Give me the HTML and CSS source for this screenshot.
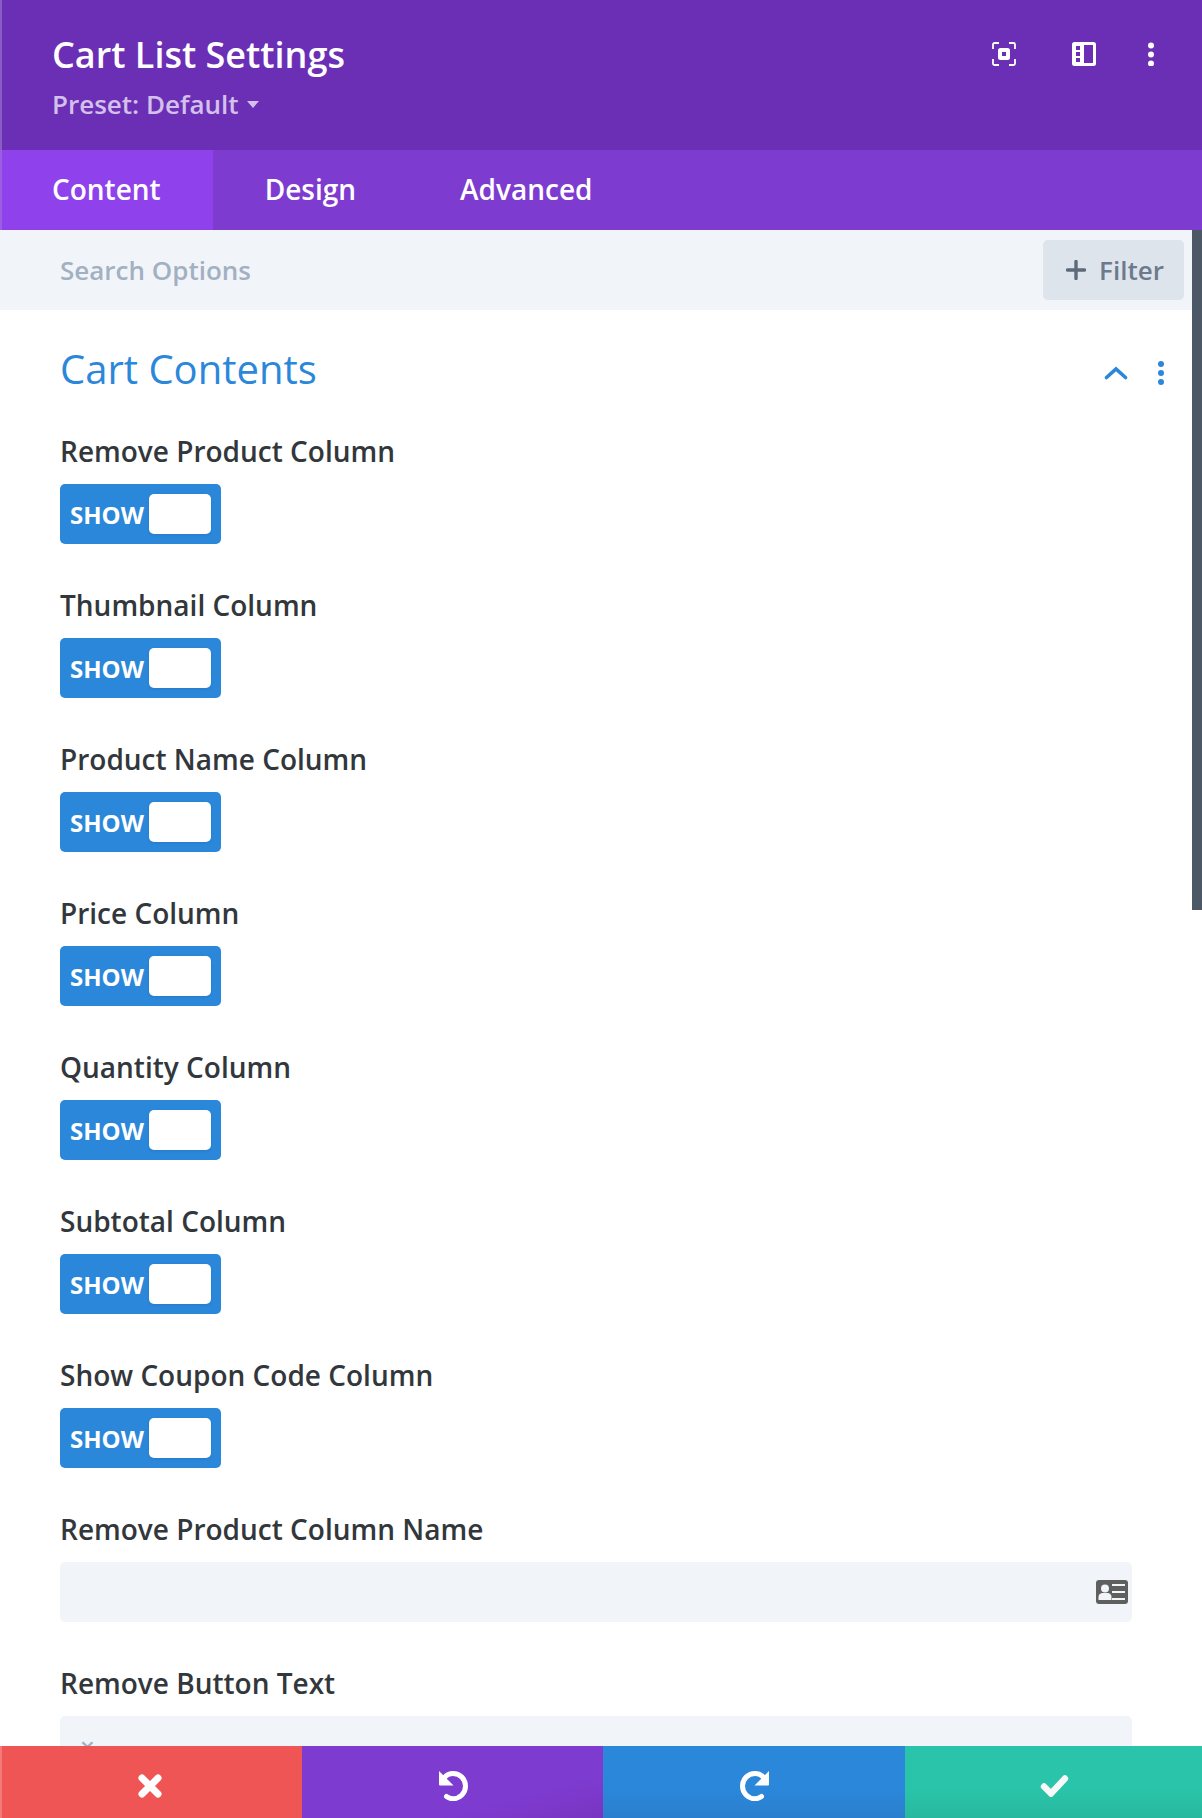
FILE: index.html
```html
<!DOCTYPE html>
<html lang="en">
<head>
<meta charset="utf-8">
<title>Cart List Settings</title>
<link rel="stylesheet" href="styles.css">
</head>
<body>
<div class="modal">
  <header class="head">
    <div class="head-text">
      <h1 class="title">Cart List Settings</h1>
      <div class="preset">Preset: Default <span class="caret"></span></div>
    </div>
    <div class="head-icons">
      <svg class="hi" viewBox="0 0 24 24"><path d="M1 7V2.500A1.500 1.500 0 0 1 2.500 1H7M17 1h4.500A1.500 1.500 0 0 1 23 2.500V7M23 17v4.500a1.500 1.500 0 0 1-1.500 1.500H17M7 23H2.500A1.500 1.500 0 0 1 1 21.500V17" fill="none" stroke="#fff" stroke-width="1.800"/><path fill-rule="evenodd" d="M8.500 6h7A2.500 2.500 0 0 1 18 8.500v7a2.500 2.500 0 0 1-2.500 2.500h-7A2.500 2.500 0 0 1 6 15.500v-7A2.500 2.500 0 0 1 8.500 6zM10 10v4h4v-4z" fill="#fff"/></svg>
      <svg class="hi" viewBox="0 0 24 24"><path fill-rule="evenodd" d="M2.500 0h19A2.500 2.500 0 0 1 24 2.500v19a2.500 2.500 0 0 1-2.500 2.500h-19A2.500 2.500 0 0 1 0 21.500v-19A2.500 2.500 0 0 1 2.500 0zM4 4v4h4V4zm0 6v4h4v-4zm0 6v4h4v-4zM12 3v18h9V3z" fill="#fff"/></svg>
      <svg class="hi dots" viewBox="0 0 6 24"><circle cx="3" cy="3.500" r="3" fill="#fff"/><circle cx="3" cy="12.500" r="3" fill="#fff"/><circle cx="3" cy="21.500" r="3" fill="#fff"/></svg>
    </div>
  </header>
  <nav class="tabs">
    <a class="tab active">Content</a>
    <a class="tab design">Design</a>
    <a class="tab">Advanced</a>
  </nav>
  <div class="search">
    <span class="search-ph">Search Options</span>
    <button class="filter"><svg class="plus" viewBox="0 0 20 20"><path d="M10 1.500v17M1.500 10h17" stroke="#5c6a7a" stroke-width="3.400" stroke-linecap="round"/></svg>Filter</button>
  </div>
  <div class="scrollbar"></div>
  <main class="body">
    <div class="section-head">
      <h2 class="section-title">Cart Contents</h2>
      <div class="section-icons">
        <svg class="chev" viewBox="0 0 24 14"><path d="M2.500 11.500 12 3l9.500 8.500" fill="none" stroke="#2b87da" stroke-width="3.600" stroke-linecap="round"/></svg>
        <svg class="sdots" viewBox="0 0 6 24"><circle cx="3" cy="3" r="3" fill="#2b87da"/><circle cx="3" cy="12" r="3" fill="#2b87da"/><circle cx="3" cy="21" r="3" fill="#2b87da"/></svg>
      </div>
    </div>
    <div class="field"><label class="label">Remove Product Column</label><div class="toggle"><span>SHOW</span><i class="knob"></i></div></div>
    <div class="field"><label class="label">Thumbnail Column</label><div class="toggle"><span>SHOW</span><i class="knob"></i></div></div>
    <div class="field"><label class="label">Product Name Column</label><div class="toggle"><span>SHOW</span><i class="knob"></i></div></div>
    <div class="field"><label class="label">Price Column</label><div class="toggle"><span>SHOW</span><i class="knob"></i></div></div>
    <div class="field"><label class="label">Quantity Column</label><div class="toggle"><span>SHOW</span><i class="knob"></i></div></div>
    <div class="field"><label class="label">Subtotal Column</label><div class="toggle"><span>SHOW</span><i class="knob"></i></div></div>
    <div class="field"><label class="label">Show Coupon Code Column</label><div class="toggle"><span>SHOW</span><i class="knob"></i></div></div>
    <div class="field"><label class="label">Remove Product Column Name</label>
      <div class="input"><svg class="card" viewBox="0 0 32 24"><rect width="32" height="24" rx="3" fill="#5f5f5f"/><circle cx="9" cy="8.500" r="4" fill="#f1f5f9"/><path d="M2.500 20v-3c0-2.500 2-4 4-4h5c2 0 4 1.500 4 4v3z" fill="#f1f5f9"/><path d="M16 5h13M16 12h13M16 19h13" stroke="#f1f5f9" stroke-width="2"/></svg></div>
    </div>
    <div class="field"><label class="label">Remove Button Text</label>
      <div class="input"><span class="value">×</span></div>
    </div>
  </main>
  <footer class="actions">
    <button class="act red"><svg class="i-x" viewBox="0 0 24 24"><path d="M4 4l16 16M20 4 4 20" stroke="#fff" stroke-width="7" stroke-linecap="round"/></svg></button>
    <button class="act purple"><svg class="i-u" viewBox="0 0 30 30"><path d="M8.500 25.500c2 1.500 4 2.300 6.500 2.300 7 0 12.500-5.800 12.500-12.800S22 2.500 15 2.500c-3.500 0-6.500 1.500-8.500 4" fill="none" stroke="#fff" stroke-width="5" stroke-linecap="round"/><path d="M1 0v13.500a1 1 0 0 0 1 1h13.500z" fill="#fff"/></svg></button>
    <button class="act blue"><svg class="i-r" viewBox="0 0 30 30"><path d="M21.500 25.500c-2 1.500-4 2.300-6.500 2.300C8 27.800 2.500 22 2.500 15S8 2.500 15 2.500c3.500 0 6.500 1.500 8.500 4" fill="none" stroke="#fff" stroke-width="5" stroke-linecap="round"/><path d="M29 0v13.500a1 1 0 0 1-1 1H14.500z" fill="#fff"/></svg></button>
    <button class="act green"><svg class="i-c" viewBox="0 0 29 22"><path d="M4 11.500 11 18.500 25 3.500" fill="none" stroke="#f8f8f8" stroke-width="6.400" stroke-linecap="round" stroke-linejoin="miter"/></svg></button>
  </footer>
</div>
</body>
</html>
```

FILE: styles.css
```css
* { box-sizing: border-box; }
html, body { margin: 0; height: 100%; }
body { font-family: "Open Sans", "Noto Sans", sans-serif; background: #fff; color: #32373c; }
.modal { height: 1818px; display: flex; flex-direction: column; overflow: hidden; position: relative; }
.head { height: 150px; flex: none; background: #6b2fb5; border-left: 2px solid #8a5cc6; padding: 29px 48px 0 50px; display: flex; justify-content: space-between; }
.title { margin: 0; font-size: 36px; line-height: 52px; font-weight: 600; color: #fff; }
.preset { font-size: 26px; line-height: 36px; font-weight: 600; color: #d3c1ec; margin-top: 5px; display: flex; align-items: center; gap: 8px; }
.caret { width: 0; height: 0; border-left: 6px solid transparent; border-right: 6px solid transparent; border-top: 7px solid #d3c1ec; }
.head-icons { display: flex; gap: 56px; height: 66px; padding-top: 13px; }
.hi { width: 24px; height: 24px; display: block; }
.hi.dots { width: 6px; height: 24px; margin-left: -4px; }
.tabs { height: 80px; flex: none; background: #7e3bd0; border-left: 2px solid #9a5fe0; display: flex; }
.tab { padding: 0 51px; font-size: 28px; font-weight: 600; line-height: 79px; color: #fff; }
.tab.active { background: #8f42ec; padding: 0 52px 0 50px; }
.tab.design { padding: 0 53px 0 52px; }
.search { height: 80px; flex: none; background: #f1f5f9; padding: 10px 18px 10px 60px; display: flex; align-items: center; justify-content: space-between; }
.search-ph { font-size: 26px; font-weight: 600; color: #a3b0c2; }
.filter { width: 141px; height: 60px; border: 0; border-radius: 5px; background: #dde4ec; color: #6c7a8c; font: 600 26px "Open Sans", sans-serif; display: flex; align-items: center; justify-content: center; gap: 13px; padding: 0 0 0 3px; }
.plus { width: 20px; height: 20px; }
.body { flex: 1; overflow: hidden; padding: 0 60px; min-height: 0; }
.scrollbar { position: absolute; top: 230px; right: 0; width: 10px; height: 680px; background: #4c5866; }
.section-head { height: 120px; display: flex; align-items: center; justify-content: space-between; margin-right: -22px; margin-bottom: 4px; }
.section-title { margin: -2px 0 0; font-size: 40px; line-height: 52px; font-weight: 400; color: #2b87da; }
.section-icons { display: flex; align-items: center; gap: 30px; padding-top: 6px; }
.chev { width: 24px; height: 14px; display: block; }
.sdots { width: 6px; height: 24px; display: block; }
.field { margin-bottom: 44px; }
.label { display: block; font-size: 28px; line-height: 36px; font-weight: 600; color: #32373c; margin: -1px 0 15px; }
.toggle { width: 161px; height: 60px; background: #2b87da; border-radius: 5px; position: relative; padding-left: 10px; display: flex; align-items: center; }
.toggle span { font-size: 24px; font-weight: 700; color: #fff; }
.knob { position: absolute; right: 10px; top: 10px; width: 62px; height: 40px; border-radius: 5px; background: #fff; box-shadow: 0 1px 3px rgba(0,0,0,.1); }
.input { width: 1072px; height: 60px; background: #f1f5f9; border-radius: 5px; position: relative; padding: 0 20px; display: flex; align-items: center; }
.value { font-size: 26px; font-weight: 600; color: #a3b0c2; }
.card { position: absolute; right: 4px; top: 18px; width: 32px; height: 24px; }
.actions { position: absolute; left: 0; right: 0; bottom: 0; height: 72px; display: grid; grid-template-columns: 302px 301px 302px 297px; }
.act { border: 0; padding: 8px 0 0; display: flex; align-items: center; justify-content: center; }
.i-x { width: 24px; height: 24px; }
.i-u, .i-r { width: 30px; height: 30px; }
.i-c { width: 29px; height: 22px; }
.red { background: #ef5555; border-left: 2px solid #f47a7a; padding-right: 4px; }
.purple { background: linear-gradient(165deg, #7e3bd0 70%, #7835c2); padding-left: 1px; }
.blue { background: linear-gradient(#2b87da 60%, #2b7fce); padding-left: 2px; }
.green { background: linear-gradient(#29c4a9 60%, #29b89f); padding-left: 2px; }
```
